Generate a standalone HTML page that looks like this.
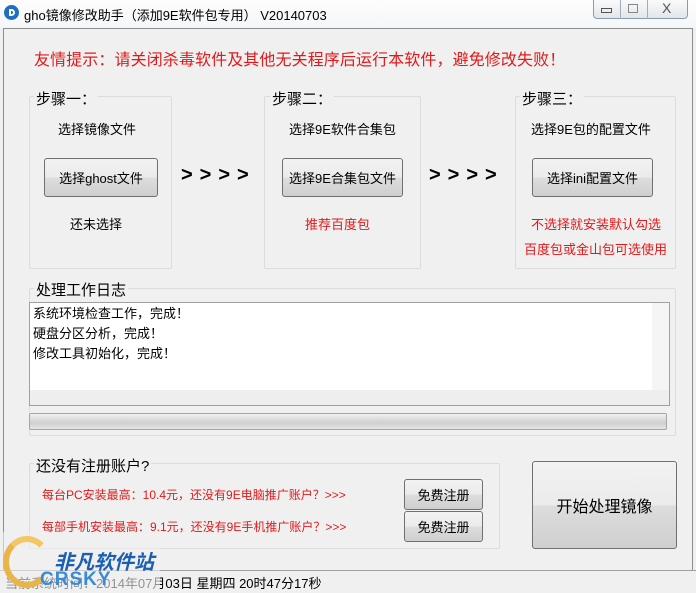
<!DOCTYPE html>
<html><head><meta charset="utf-8"><style>
*{margin:0;padding:0;box-sizing:border-box}
body{width:696px;height:593px;overflow:hidden;background:#f0f0f0;font-family:"Liberation Sans","Noto Sans CJK SC",sans-serif;font-size:13px;color:#000;position:relative}
.a{position:absolute;white-space:nowrap}
.grp{position:absolute;border:1px solid #dcdcdc;border-radius:2px}
.btn{position:absolute;border:1px solid #707070;border-radius:3px;background:linear-gradient(#f2f2f2,#ebebeb 50%,#dddddd 51%,#cfcfcf);display:flex;align-items:center;justify-content:center;font-size:13px}
.red{color:#e0191b}
</style></head><body>
<div class="a" style="left:0;top:0;width:696px;height:28px;background:linear-gradient(#fdfdfd,#f4f6f8)"></div>
<div class="a" style="left:4px;top:5px;width:15px;height:15px;border-radius:50%;background:#1e6fc2"></div>
<div class="a" style="left:9px;top:9px;width:6px;height:7px;border:2px solid #fff;border-radius:0 4px 4px 0"></div>
<div class="a" style="left:24px;top:5px;font-size:13px">gho镜像修改助手（添加9E软件包专用） V20140703</div>
<div class="a" style="left:593px;top:0;width:95px;height:19px;border:1px solid #8a9bb0;border-top:none;border-radius:0 0 4px 4px;background:linear-gradient(#fafafa,#e2e6ea)"></div>
<div class="a" style="left:620px;top:0;width:1px;height:19px;background:#a0acb8"></div>
<div class="a" style="left:647px;top:0;width:1px;height:19px;background:#a0acb8"></div>
<div class="a" style="left:601px;top:8px;width:11px;height:5px;border:1px solid #555"></div>
<div class="a" style="left:628px;top:4px;width:10px;height:9px;border:1px solid #888"></div>
<div class="a" style="left:662px;top:0px;font-size:14px;color:#555">X</div>
<div class="a" style="left:3px;top:28px;width:690px;height:543px;border:1px solid #8c8c8c;border-bottom:none"></div>

<div class="a red" style="left:34px;top:46px;font-size:16px;letter-spacing:0.1px">友情提示：请关闭杀毒软件及其他无关程序后运行本软件，避免修改失败！</div>

<div class="grp" style="left:29px;top:96px;width:143px;height:173px"></div>
<div class="a" style="left:34px;top:88px;font-size:15px;background:#f0f0f0;padding:0 2px">步骤一：</div>
<div class="a" style="left:58px;top:119px">选择镜像文件</div>
<div class="btn" style="left:44px;top:158px;width:114px;height:39px">选择ghost文件</div>
<div class="a" style="left:70px;top:214px">还未选择</div>

<div class="grp" style="left:264px;top:96px;width:157px;height:173px"></div>
<div class="a" style="left:270px;top:88px;font-size:15px;background:#f0f0f0;padding:0 2px">步骤二：</div>
<div class="a" style="left:289px;top:119px">选择9E软件合集包</div>
<div class="btn" style="left:282px;top:158px;width:121px;height:39px">选择9E合集包文件</div>
<div class="a red" style="left:305px;top:214px">推荐百度包</div>

<div class="grp" style="left:515px;top:96px;width:161px;height:173px"></div>
<div class="a" style="left:520px;top:88px;font-size:15px;background:#f0f0f0;padding:0 2px">步骤三：</div>
<div class="a" style="left:531px;top:119px">选择9E包的配置文件</div>
<div class="btn" style="left:532px;top:158px;width:121px;height:39px">选择ini配置文件</div>
<div class="a red" style="left:531px;top:214px">不选择就安装默认勾选</div>
<div class="a red" style="left:524px;top:239px">百度包或金山包可选使用</div>

<div class="a" style="left:181px;top:164px;font-size:20px;font-weight:bold;letter-spacing:7px">&gt;&gt;&gt;&gt;</div>
<div class="a" style="left:429px;top:164px;font-size:20px;font-weight:bold;letter-spacing:7px">&gt;&gt;&gt;&gt;</div>

<div class="grp" style="left:29px;top:288px;width:647px;height:148px"></div>
<div class="a" style="left:34px;top:279px;font-size:15px;background:#f0f0f0;padding:0 2px">处理工作日志</div>
<div class="a" style="left:29px;top:302px;width:641px;height:104px;border:1px solid #a0a0a0;background:#fff"></div>
<div class="a" style="left:652px;top:303px;width:17px;height:87px;background:#f5f5f5"></div>
<div class="a" style="left:30px;top:390px;width:639px;height:15px;background:#eee"></div>
<div class="a" style="left:33px;top:304px;line-height:20px">系统环境检查工作，完成！<br>硬盘分区分析，完成！<br>修改工具初始化，完成！</div>
<div class="a" style="left:29px;top:413px;width:638px;height:17px;border:1px solid #a6a6a6;border-radius:2px;background:linear-gradient(#f0f0f0,#dadada 40%,#cfcfcf 60%,#e4e4e4)"></div>

<div class="grp" style="left:29px;top:463px;width:471px;height:86px"></div>
<div class="a" style="left:34px;top:455px;font-size:15px;background:#f0f0f0;padding:0 2px">还没有注册账户?</div>
<div class="a red" style="left:42px;top:486px;font-size:12px">每台PC安装最高：10.4元，还没有9E电脑推广账户？&gt;&gt;&gt;</div>
<div class="a red" style="left:42px;top:518px;font-size:12px">每部手机安装最高：9.1元，还没有9E手机推广账户？&gt;&gt;&gt;</div>
<div class="btn" style="left:404px;top:479px;width:79px;height:31px">免费注册</div>
<div class="btn" style="left:404px;top:511px;width:79px;height:31px">免费注册</div>
<div class="btn" style="left:532px;top:461px;width:145px;height:88px;font-size:16px">开始处理镜像</div>

<div class="a" style="left:0;top:570px;width:696px;height:1px;background:#a0a0a0"></div>
<div class="a" style="left:5px;top:573px">当前系统时间：2014年07月03日 星期四 20时47分17秒</div>
<div class="a" style="left:0;top:532px;width:160px;height:61px;background:rgba(240,240,240,.6)"></div>
<div class="a" style="left:3px;top:536px;width:48px;height:52px;border-radius:50%;border:6px solid #e9b54a;border-right-color:transparent;border-top-color:#f2c766"></div>
<div class="a" style="left:54px;top:546px;font-size:20px;font-weight:bold;font-style:italic;color:#1a5fb4">非凡软件站</div>
<div class="a" style="left:40px;top:569px;font-size:19px;font-weight:bold;color:#3a8ad8;letter-spacing:1px">CRSKY</div>
</body></html>
